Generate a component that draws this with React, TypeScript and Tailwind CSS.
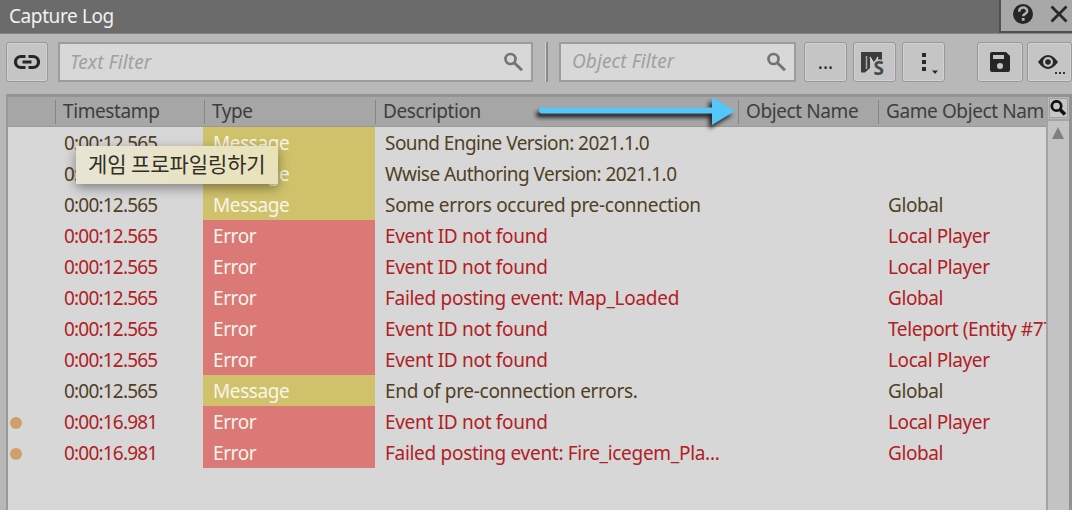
import type { ReactNode } from 'react'

type LogRow = {
  time: string
  type: 'Message' | 'Error'
  description: string
  gameObject?: string
  marked?: boolean
}

const rows: LogRow[] = [
  { time: '0:00:12.565', type: 'Message', description: 'Sound Engine Version: 2021.1.0' },
  { time: '0:00:12.565', type: 'Message', description: 'Wwise Authoring Version: 2021.1.0' },
  { time: '0:00:12.565', type: 'Message', description: 'Some errors occured pre-connection', gameObject: 'Global' },
  { time: '0:00:12.565', type: 'Error', description: 'Event ID not found', gameObject: 'Local Player' },
  { time: '0:00:12.565', type: 'Error', description: 'Event ID not found', gameObject: 'Local Player' },
  { time: '0:00:12.565', type: 'Error', description: 'Failed posting event: Map_Loaded', gameObject: 'Global' },
  { time: '0:00:12.565', type: 'Error', description: 'Event ID not found', gameObject: 'Teleport (Entity #77)' },
  { time: '0:00:12.565', type: 'Error', description: 'Event ID not found', gameObject: 'Local Player' },
  { time: '0:00:12.565', type: 'Message', description: 'End of pre-connection errors.', gameObject: 'Global' },
  { time: '0:00:16.981', type: 'Error', description: 'Event ID not found', gameObject: 'Local Player', marked: true },
  { time: '0:00:16.981', type: 'Error', description: 'Failed posting event: Fire_icegem_Pla...', gameObject: 'Global', marked: true },
]

function ToolButton({ label, className, children }: { label: string; className: string; children: ReactNode }) {
  return (
    <button
      aria-label={label}
      className={`h-10 shrink-0 flex items-center justify-center rounded-[3px] border border-[#989898] bg-[#c5c5c5] shadow-[inset_0_0_0_1px_#d2d2d2] ${className}`}
    >
      {children}
    </button>
  )
}

function SearchIcon() {
  return (
    <svg width="20" height="20" viewBox="0 0 20 20" fill="none" stroke="#747474" aria-hidden>
      <circle cx="7.5" cy="7" r="5" strokeWidth="2.7" />
      <path d="M11 10.5l8 7.8" strokeWidth="3" />
    </svg>
  )
}

function FilterField({ label, className, textClass }: { label: string; className: string; textClass?: string }) {
  return (
    <div className={`h-10 shrink-0 flex items-center justify-between border-2 border-[#9c9c9c] bg-[#d8d8d8] ${className}`}>
      <span className={`italic tracking-[0.1px] text-[#a0a0a0] ${textClass ?? ''}`}>{label}</span>
      <SearchIcon />
    </div>
  )
}

function HeaderCell({ label }: { label?: string }) {
  return (
    <div className="relative flex items-center overflow-hidden whitespace-nowrap pb-px pl-[8px] text-[#403d40]">
      {label && <span className="absolute left-0 top-[3px] h-6 w-px bg-[#858585]" />}
      {label}
    </div>
  )
}

export default function App() {
  return (
    <div className="relative flex h-[510px] w-[1072px] flex-col overflow-hidden bg-[#b8b8b8] font-['Noto_Sans','Noto_Sans_CJK_KR',sans-serif] text-[19px] leading-[33px] tracking-[-0.4px]">
      <div className="flex h-[34px] shrink-0 justify-between border-b border-[#858585] bg-[#6b6b6b]">
        <h1 className="pl-[9px] text-[#f1f1f1]">Capture Log</h1>
        <div className="flex h-[33px] w-[73px] items-start border-b-2 border-l-2 border-[#505050] bg-[#a8a8a8]">
          <svg width="71" height="30" viewBox="0 0 71 30" fill="none" aria-hidden>
            <circle cx="22" cy="14" r="10" fill="#262626" />
            <path d="M18.2 11.7c0-5.5 8-5.2 8-.7 0 3-4 2.6-4 5.2" stroke="#b2b2b2" strokeWidth="2.5" />
            <path d="M20.8 18h2.8v2.8h-2.8z" fill="#b2b2b2" />
            <path d="M50.5 6.5l15 15M65.5 6.5l-15 15" stroke="#292929" strokeWidth="2.8" />
          </svg>
        </div>
      </div>

      <div className="flex h-[60px] shrink-0 items-start pl-[6px] pt-2">
        <ToolButton label="Link" className="w-[42px]">
          <svg width="26" height="16" viewBox="1 0 26 16" fill="none" stroke="#262626" strokeWidth="3.2" aria-hidden>
            <path d="M12.5 2.5H8a5.500 5.500 0 0 0 0 11h4.500M15.500 2.500H20a5.500 5.500 0 0 1 0 11h-4.500M9.500 8h9" />
          </svg>
        </ToolButton>
        <FilterField label="Text Filter" className="ml-[10px] w-[475px] pl-[10px] pr-[8px]" />
        <div className="ml-[12px] h-10 w-[3px] shrink-0 border-l border-r-2 border-l-[#d2d2d2] border-r-[#8b8b8b]" />
        <FilterField label="Object Filter" className="ml-[11px] w-[237px] pl-[11px] pr-[8px]" textClass="pb-px" />
        <ToolButton label="Browse" className="ml-[8px] w-[43px]">
          <span className="tracking-[0px] text-[#292929]">...</span>
        </ToolButton>
        <ToolButton label="Mute and solo" className="ml-[6px] w-[43px]">
          <svg width="27" height="28" viewBox="0 0 27 28" aria-hidden>
            <path d="M0 4h21v10h-4V9l-4 6-4-6v11l-5 4.500H0z" fill="#3c3c3c" />
            <path d="M5.500 8v13" stroke="#a8a8a8" strokeWidth="1.500" />
            <path d="M9 9l4 7 4-7" stroke="#dadada" strokeWidth="1.300" fill="none" />
            <text x="12.500" y="27" fontSize="19" fontWeight="700" fill="#494949" stroke="#c5c5c5" strokeWidth="3" paintOrder="stroke">S</text>
          </svg>
        </ToolButton>
        <ToolButton label="More" className="ml-[6px] w-[43px]">
          <svg width="40" height="36" viewBox="0 0 40 36" fill="#292929" aria-hidden>
            <path d="M18 9h4v4h-4zM18 16h4v4h-4zM18 23h4v4h-4zM28 26.500h6l-3 3.500z" />
          </svg>
        </ToolButton>
        <ToolButton label="Save" className="ml-[32px] w-[46px]">
          <svg width="20" height="20" viewBox="0 0 20 20" aria-hidden>
            <path d="M2 0h14l4 4v14q0 2-2 2H2q-2 0-2-2V2q0-2 2-2z" fill="#262626" />
            <path d="M3 3h11v4H3z" fill="#c5c5c5" />
            <circle cx="10" cy="14" r="3" fill="#c5c5c5" />
          </svg>
        </ToolButton>
        <ToolButton label="View options" className="ml-[4px] w-[45px]">
          <svg width="42" height="36" viewBox="0 0 42 36" fill="none" aria-hidden>
            <path d="M9 18q10-14 20 0-10 14-20 0z" fill="#262626" />
            <circle cx="19" cy="18" r="5" fill="#c5c5c5" />
            <circle cx="19" cy="18" r="2.8" fill="#262626" />
            <path d="M26 28h2v2h-2zM30 28h2v2h-2zM34 28h2v2h-2z" fill="#333" />
          </svg>
        </ToolButton>
      </div>

      <div className="ml-[6px] flex grow border-l-2 border-t-[3px] border-l-[#999] border-t-[#949494]">
        <div className="flex w-[1038px] shrink-0 flex-col overflow-hidden bg-[#d7d7d7]">
          <div className="grid h-[30px] shrink-0 grid-cols-[47px_149px_171px_363px_140px_168px] border-b border-[#999] bg-[#a6a6a6] leading-[27px]">
            <HeaderCell />
            <HeaderCell label="Timestamp" />
            <HeaderCell label="Type" />
            <HeaderCell label="Description" />
            <HeaderCell label="Object Name" />
            <HeaderCell label="Game Object Nam" />
          </div>
          {rows.map((row, i) => (
            <div
              key={i}
              className={`grid h-[31px] shrink-0 grid-cols-[47px_148px_172px_363px_308px] whitespace-nowrap ${row.type === 'Error' ? 'text-[#b12024]' : 'text-[#51401f]'}`}
            >
              <div className="flex items-center pl-[2px]">
                {row.marked && <span className="size-3 rounded-full bg-[#cfa06d]" />}
              </div>
              <div className="pl-[9px] tracking-[-0.8px]">{row.time}</div>
              <div className={`h-[31px] pl-[10px] text-[#f8f5ec] ${row.type === 'Error' ? 'bg-[#da7976]' : 'bg-[#d0c26b]'}`}>{row.type}</div>
              <div className={`pl-[10px] ${i < 2 ? 'tracking-[-0.55px]' : 'tracking-[-0.3px]'}`}>{row.description}</div>
              <div className="h-[31px] overflow-hidden pl-[150px]">{row.gameObject}</div>
            </div>
          ))}
        </div>
        <div className="flex w-[23px] shrink-0 flex-col border-l-2 border-[#a3a3a3] bg-[#c3c3c3]">
          <div className="flex h-[22px] w-[21px] items-center justify-center border-2 border-[#b8b8b8] bg-[#c7c7c7] outline outline-[#a0a0a0] -outline-offset-2">
            <svg width="17" height="17" viewBox="1 1 17 17" fill="none" stroke="#111" strokeWidth="2.7" aria-hidden>
              <circle cx="7.5" cy="7" r="4.7" />
              <path d="M11 10.5l5 5" strokeWidth="3.5" />
            </svg>
          </div>
          <div className="flex grow justify-center border-t-2 border-[#a3a3a3] pr-px pt-[6px]">
            <svg width="12" height="12" viewBox="0 0 12 12" aria-hidden>
              <path d="M6 0l6 12H0z" fill="#808080" />
            </svg>
          </div>
        </div>
        <div className="w-[3px] shrink-0 bg-[#929292]" />
      </div>

      {/* arrow pointing at the Object Name column */}
      <svg className="absolute left-[530px] top-[90px] drop-shadow-[-3px_4px_2px_rgba(0,0,0,0.8)]" width="210" height="40" viewBox="0 0 210 40" aria-hidden>
        <path d="M12 17.500h170V7l23 14-23 14V23.500H12a3 3 0 0 1 0-6z" fill="#55c6f8" />
      </svg>

      <div className="absolute left-[76px] top-[146px] flex h-[38px] w-[202px] items-center whitespace-nowrap rounded-[1px] bg-gradient-to-r from-[#e7e4d4] to-[#e9e2b8] pb-[3px] pl-[12px] font-['Noto_Sans_CJK_KR',sans-serif] text-[21px] tracking-[-0.1px] text-[#302f25] shadow-[0_4px_12px_rgba(0,0,0,0.4)]">
        게임 프로파일링하기
      </div>
    </div>
  )
}
